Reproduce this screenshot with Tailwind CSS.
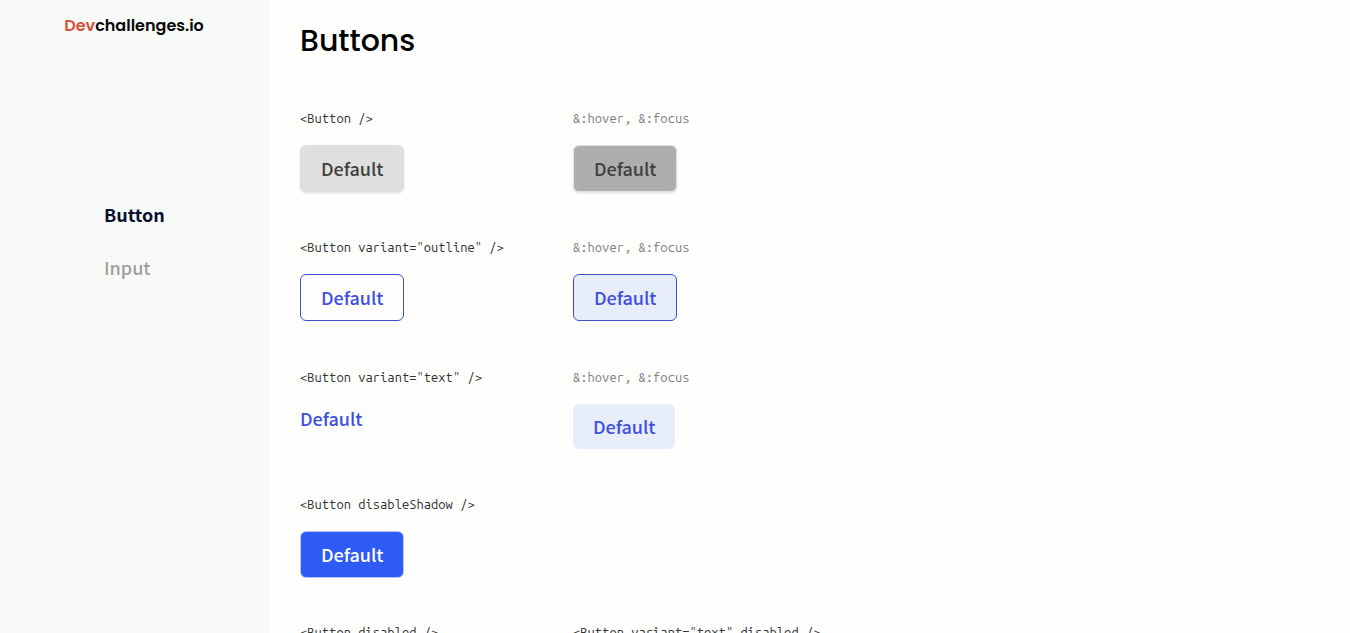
<!DOCTYPE html>
<html lang="en">
<head>
<meta charset="utf-8">
<meta name="viewport" content="width=device-width, initial-scale=1">
<title>Buttons</title>
<script src="https://cdn.jsdelivr.net/npm/@tailwindcss/browser@4"></script>
</head>
<body class="flex h-screen overflow-hidden bg-[#fefefd] font-['Noto_Sans_JP','Noto_Sans_CJK_JP',sans-serif]">
<aside class="flex w-1/5 shrink-0 flex-col bg-[#f8faf8]">
  <a href="#" class="mt-3 self-center pr-0.5 font-[Poppins,Inter,sans-serif] text-base leading-7 font-semibold text-[#090909]"><span class="text-[#d9503c]">Dev</span>challenges.io</a>
  <nav class="mt-40 flex flex-col items-start gap-[25px] pl-[104px] text-lg leading-7">
    <a href="#button" class="font-bold text-[#090f31]">Button</a>
    <a href="#input" class="font-medium text-[#9e9e9e]">Input</a>
  </nav>
</aside>
<main class="min-w-0 flex-1 pt-[21px] pl-[30px]">
  <h1 class="font-[Poppins,Inter,sans-serif] text-3xl leading-10 font-medium text-black">Buttons</h1>
  <div class="mt-[47px] grid grid-cols-[273px_1fr] font-medium">
    <section class="h-[129px]">
      <p class="mb-4 font-['Ubuntu_Mono','DejaVu_Sans_Mono',monospace] text-[13px] leading-[21px] font-normal text-[#333]">&lt;Button /&gt;</p>
      <button class="block rounded-md border border-[#dfdfde] bg-[#dfdfde] px-5 py-2 text-lg leading-[29px] text-[#3f3f3f] shadow-sm">Default</button>
    </section>
    <section class="h-[129px]">
      <p class="mb-4 font-['Ubuntu_Mono','DejaVu_Sans_Mono',monospace] text-[13px] leading-[21px] font-normal text-[#828282]">&amp;:hover, &amp;:focus</p>
      <button class="block rounded-md border border-[#e3e3e3] bg-[#aeaeac] px-5 py-2 text-lg leading-[29px] text-[#3f3f3f] shadow-sm">Default</button>
    </section>
    <section class="h-[130px]">
      <p class="mb-4 font-['Ubuntu_Mono','DejaVu_Sans_Mono',monospace] text-[13px] leading-[21px] font-normal text-[#333]">&lt;Button variant="outline" /&gt;</p>
      <button class="block rounded-md border border-[#3d50c8] px-5 py-2 text-lg leading-[29px] text-[#414fdd]">Default</button>
    </section>
    <section class="h-[130px]">
      <p class="mb-4 font-['Ubuntu_Mono','DejaVu_Sans_Mono',monospace] text-[13px] leading-[21px] font-normal text-[#828282]">&amp;:hover, &amp;:focus</p>
      <button class="block rounded-md border border-[#3d50c8] bg-[#e7eefa] px-5 py-2 text-lg leading-[29px] text-[#414fdd]">Default</button>
    </section>
    <section class="h-[127px]">
      <p class="mb-4 font-['Ubuntu_Mono','DejaVu_Sans_Mono',monospace] text-[13px] leading-[21px] font-normal text-[#333]">&lt;Button variant="text" /&gt;</p>
      <button class="block text-lg leading-7 text-[#414fdd]">Default</button>
    </section>
    <section class="h-[127px]">
      <p class="mb-4 font-['Ubuntu_Mono','DejaVu_Sans_Mono',monospace] text-[13px] leading-[21px] font-normal text-[#828282]">&amp;:hover, &amp;:focus</p>
      <button class="block rounded-md bg-[#e7eefa] px-5 py-2 text-lg leading-[29px] text-[#414fdd]">Default</button>
    </section>
    <section class="col-span-2 h-[128px]">
      <p class="mb-4 font-['Ubuntu_Mono','DejaVu_Sans_Mono',monospace] text-[13px] leading-[21px] font-normal text-[#333]">&lt;Button disableShadow /&gt;</p>
      <button class="block rounded-md border border-[#b5c5f8] bg-[#2e5bf6] px-5 py-2 text-lg leading-[29px] text-white">Default</button>
    </section>
    <section>
      <p class="font-['Ubuntu_Mono','DejaVu_Sans_Mono',monospace] text-[13px] leading-[21px] font-normal text-[#333]">&lt;Button disabled /&gt;</p>
    </section>
    <section>
      <p class="font-['Ubuntu_Mono','DejaVu_Sans_Mono',monospace] text-[13px] leading-[21px] font-normal text-[#333]">&lt;Button variant="text" disabled /&gt;</p>
    </section>
  </div>
</main>
</body>
</html>
